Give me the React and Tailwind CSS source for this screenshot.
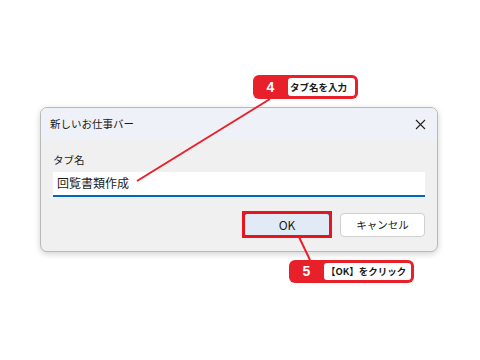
export default function App() {
  return (
    <div className="relative w-[480px] h-[360px] overflow-hidden bg-white pt-[107px] pl-[40px] font-['Noto_Sans_CJK_JP',sans-serif] text-[#1a1a1a]">
      {/* dialog */}
      <div className="w-[398px] rounded-[7px] border border-[#b9b9b9] bg-[#f0f0f0] shadow-[0_2px_6px_rgba(0,0,0,0.18)] overflow-hidden">
        <div className="flex h-[32px] items-center justify-between bg-[#eef1f7] pl-[9px] pr-[11px]">
          <span className="text-[10.5px] leading-none">新しいお仕事バー</span>
          <svg width="11" height="11" viewBox="0 0 11 11">
            <path d="M1 1L10 10M10 1L1 10" stroke="#222" strokeWidth="1.1" />
          </svg>
        </div>
        <div className="px-[12px] pt-[12px] pb-[14px]">
          <div className="h-[16px] text-[10.5px] leading-[16px]">タブ名</div>
          <div className="mt-[4px] flex h-[25px] items-center border-b-2 border-[#0067c0] bg-white pl-[4px] pb-[2px] text-[12px]">
            回覧書類作成
          </div>
          <div className="mt-[16px] flex justify-end gap-[10px]">
            <div className="relative">
              <button className="flex h-[24px] w-[86px] items-center justify-center rounded-[3px] border border-[#005fb8] bg-[#e0ebf6] text-[12px]">
                OK
              </button>
              <span className="pointer-events-none absolute -left-[2px] -right-[2px] -top-[2px] -bottom-[1px] border-[3px] border-[#e8141e]"></span>
            </div>
            <button className="flex h-[24px] w-[85px] items-center justify-center rounded-[4px] border border-[#d0d0d0] bg-white text-[10.5px]">
              キャンセル
            </button>
          </div>
        </div>
      </div>

      {/* leader lines */}
      <svg className="pointer-events-none absolute left-0 top-0" width="480" height="360">
        <line x1="270" y1="99" x2="137" y2="181" stroke="#e8202a" strokeWidth="2" />
        <line x1="299" y1="237" x2="310" y2="260" stroke="#e8202a" strokeWidth="2" />
      </svg>

      {/* callout 4 */}
      <div className="absolute left-[253px] top-[75px] flex h-[24px] w-[105px] items-stretch rounded-[6px] bg-[#e8202a] p-[3px] pl-0">
        <div className="flex w-[35px] items-center justify-center font-['Liberation_Sans',sans-serif] text-[14px] font-bold text-white">
          4
        </div>
        <div className="flex flex-1 items-center rounded-[3px] bg-white pl-[2px] text-[9.5px] font-bold">
          タブ名を入力
        </div>
      </div>

      {/* callout 5 */}
      <div className="absolute left-[289px] top-[260px] flex h-[23px] w-[125px] items-stretch rounded-[6px] bg-[#e8202a] p-[3px] pl-0">
        <div className="flex w-[35px] items-center justify-center font-['Liberation_Sans',sans-serif] text-[14px] font-bold text-white">
          5
        </div>
        <div className="flex flex-1 items-center rounded-[3px] bg-white pl-[2px] text-[9.5px] font-bold">
          【OK】をクリック
        </div>
      </div>
    </div>
  );
}
